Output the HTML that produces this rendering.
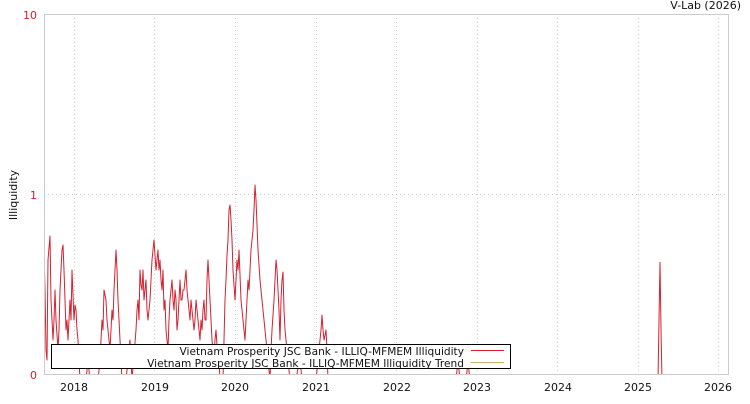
<!DOCTYPE html>
<html><head><meta charset="utf-8"><style>
body{margin:0;background:#fff;width:750px;height:400px;overflow:hidden;font-family:"DejaVu Sans","Liberation Sans",sans-serif}
</style></head><body>
<svg width="750" height="400" xmlns="http://www.w3.org/2000/svg" font-family="DejaVu Sans, Liberation Sans, sans-serif">
<defs><clipPath id="c"><rect x="44" y="14" width="685" height="360"/></clipPath></defs>
<g stroke="#ccc" stroke-dasharray="1,3" stroke-width="1">
<line x1="44" y1="194.5" x2="728" y2="194.5"/>
<line x1="74.5" y1="14" x2="74.5" y2="374"/>
<line x1="154.5" y1="14" x2="154.5" y2="374"/>
<line x1="235.5" y1="14" x2="235.5" y2="374"/>
<line x1="316.5" y1="14" x2="316.5" y2="374"/>
<line x1="396.5" y1="14" x2="396.5" y2="374"/>
<line x1="477.5" y1="14" x2="477.5" y2="374"/>
<line x1="557.5" y1="14" x2="557.5" y2="374"/>
<line x1="638.5" y1="14" x2="638.5" y2="374"/>
<line x1="718.5" y1="14" x2="718.5" y2="374"/>
</g>
<g clip-path="url(#c)">
<polyline fill="none" stroke="#d62030" stroke-width="1" stroke-linejoin="round" points="44,250 45,290 46,350 47,360 48,260 50,236 51,300 53,340 54,320 55,290 56,320 58,350 59,330 60,290 62,250 63,245 64,270 65,300 66,330 67,320 68,340 70,300 71,320 72,270 74,320 75,305 76,310 77,330 78,340 80,380 86,380 88,360 90,380 98,380 100,360 102,320 103,330 104,290 106,300 107,320 108,330 110,350 111,330 112,310 113,320 114,290 115,270 116,250 117,270 118,300 119,320 120,340 122,380 126,380 128,360 130,340 132,380 136,330 137,310 138,300 139,320 140,270 141,285 142,290 143,270 144,300 146,280 147,310 148,320 150,300 151,280 152,260 153,250 154,240 155,255 156,270 157,260 158,250 159,270 160,260 161,280 162,290 163,270 164,310 165,300 166,330 167,340 168,350 169,320 170,300 171,290 172,280 173,300 174,310 175,290 176,300 177,330 178,320 179,300 180,280 181,300 182,300 183,290 184,290 185,280 186,270 187,290 188,300 189,310 190,320 191,300 192,310 193,320 194,330 195,320 196,300 197,310 198,320 199,330 200,340 201,320 202,330 203,310 204,300 205,320 206,320 207,280 208,260 209,280 210,300 211,320 212,340 213,350 214,360 215,340 216,330 217,345 218,350 219,360 220,380 223,380 224,340 225,300 226,280 227,255 228,240 229,210 230,205 231,220 232,240 233,270 234,285 235,300 236,280 237,260 238,270 239,250 240,275 241,300 242,310 243,320 244,330 245,340 246,320 247,300 248,280 249,290 250,270 251,250 252,240 253,230 254,210 255,185 256,200 257,225 258,250 259,265 260,280 261,290 262,300 263,310 264,320 265,330 266,340 267,350 268,360 270,380 271,350 272,330 273,315 274,300 275,280 276,260 277,270 278,290 279,310 280,340 281,300 282,280 283,272 284,310 285,330 286,340 287,350 288,360 290,380 296,380 298,368 300,360 302,380 316,380 318,360 320,340 321,330 322,315 323,330 324,340 325,335 326,330 327,350 328,380 340,380"/>
<polyline fill="none" stroke="#d62030" stroke-width="1" points="456,380 458,360 460,380 466,380 468,362 470,380"/>
<polyline fill="none" stroke="#d62030" stroke-width="1" points="658,380 659,320 660,262 661,330 662,380"/>
</g>
<rect x="44.5" y="14.5" width="684" height="360" fill="none" stroke="#ccc"/>
<g fill="#d62030" font-size="11" text-anchor="end">
<text x="37" y="19">10</text><text x="37" y="199">1</text><text x="37" y="379">0</text>
</g>
<g fill="#111" font-size="11" text-anchor="middle">
<text x="74" y="391">2018</text><text x="155" y="391">2019</text><text x="235" y="391">2020</text><text x="316" y="391">2021</text><text x="397" y="391">2022</text><text x="477" y="391">2023</text><text x="558" y="391">2024</text><text x="638" y="391">2025</text><text x="718" y="391">2026</text>
</g>
<text x="741" y="9" fill="#111" font-size="11" text-anchor="end">V-Lab (2026)</text>
<text transform="translate(17,195) rotate(-90)" fill="#111" font-size="11" text-anchor="middle">Illiquidity</text>
<rect x="51.5" y="344.5" width="459" height="24" fill="#fff" stroke="#000"/>
<g fill="#111" font-size="10.6" text-anchor="end">
<text x="464" y="355">Vietnam Prosperity JSC Bank - ILLIQ-MFMEM Illiquidity</text>
<text x="464" y="367">Vietnam Prosperity JSC Bank - ILLIQ-MFMEM Illiquidity Trend</text>
</g>
<line x1="471" y1="350.5" x2="504" y2="350.5" stroke="#d62030"/>
<line x1="471" y1="362.5" x2="504" y2="362.5" stroke="#c8b070"/>
</svg>
</body></html>
